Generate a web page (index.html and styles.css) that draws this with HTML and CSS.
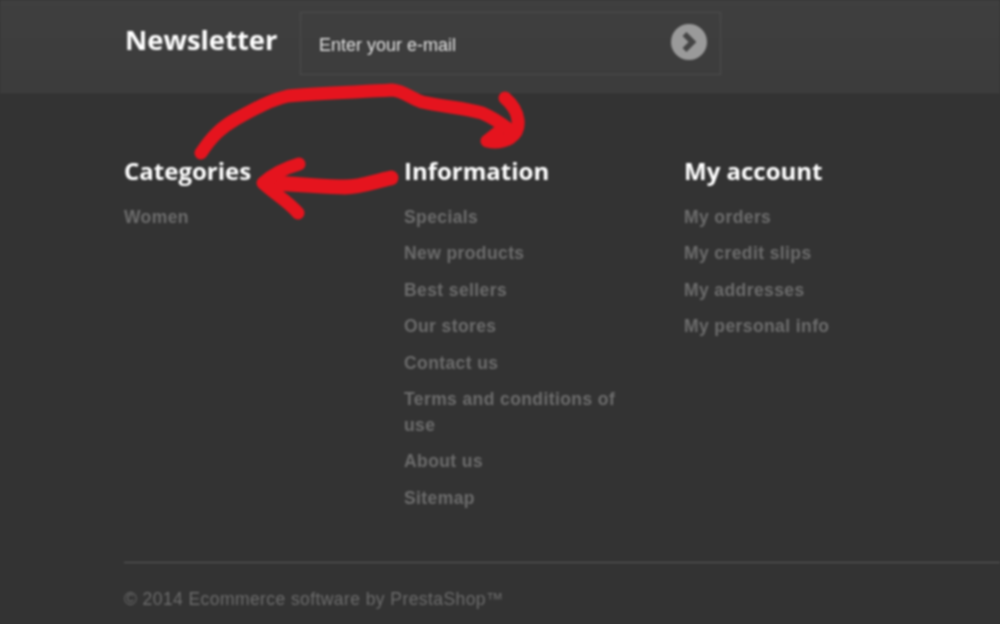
FILE: index.html
```html
<!DOCTYPE html>
<html lang="en">
<head>
<meta charset="utf-8">
<title>Footer</title>
<link rel="stylesheet" href="styles.css">
</head>
<body>
<div class="page">
  <section class="news">
    <h2 class="news-title">Newsletter</h2>
    <div class="news-field">
      <span class="news-placeholder">Enter your e-mail</span>
      <span class="news-btn">
        <svg viewBox="0 0 36 36" width="36" height="36" aria-hidden="true">
          <circle cx="18" cy="18" r="18" fill="#9a9a9a"/>
          <path d="M13.5 10 L21.5 18 L13.5 26" fill="none" stroke="#444444" stroke-width="5.5"/>
        </svg>
      </span>
    </div>
  </section>
  <section class="cols">
    <div class="col">
      <h3 class="col-title">Categories</h3>
      <ul class="links">
        <li>Women</li>
      </ul>
    </div>
    <div class="col">
      <h3 class="col-title">Information</h3>
      <ul class="links">
        <li>Specials</li>
        <li>New products</li>
        <li>Best sellers</li>
        <li>Our stores</li>
        <li>Contact us</li>
        <li>Terms and conditions of use</li>
        <li>About us</li>
        <li>Sitemap</li>
      </ul>
    </div>
    <div class="col">
      <h3 class="col-title">My account</h3>
      <ul class="links">
        <li>My orders</li>
        <li>My credit slips</li>
        <li>My addresses</li>
        <li>My personal info</li>
      </ul>
    </div>
  </section>
  <footer class="legal">© 2014 Ecommerce software by PrestaShop™</footer>
  <svg class="scribble" viewBox="0 0 1000 624" width="1000" height="624" aria-hidden="true">
    <path d="M201 153 C212 136 222 127 236 119 C254 109 270 100 288 96 C320 93 360 92 392 90 C404 91 410 98 422 102 C445 107 465 108 482 113 C494 118 502 124 511 131"/>
    <path d="M505 98 C512 104 517 112 518 120 C519 128 516 134 510 138 C503 142 495 143 487 141 L497 133"/>
    <path class="thick" d="M391 178 C375 181 362 187 345 187 C325 187 300 184 265 183"/>
    <path d="M299 164 C285 168 272 175 263 183 C272 192 288 201 298 213"/>
  </svg>
</div>
</body>
</html>
```
FILE: styles.css
```css
* { box-sizing: border-box; }
html, body { margin: 0; padding: 0; }
body {
  width: 1000px;
  height: 624px;
  overflow: hidden;
  background: #333333;
}
.page {
  position: relative;
  width: 1000px;
  height: 624px;
  overflow: hidden;
  background: #333333;
  filter: blur(0.8px);
}
.news {
  height: 93px;
  padding: 12px 0 0 125px;
  display: flex;
  align-items: flex-start;
  gap: 22px;
  background: linear-gradient(#3f3f3f, #3c3c3c);
  border-bottom: 1px solid #404040;
}
.news-title {
  margin: 0;
  width: 153px;
  font: 700 27.4px/55px "Open Sans", sans-serif;
  color: #ffffff;
  white-space: nowrap;
}
.news-field {
  width: 421px;
  height: 63px;
  padding: 2px 13px 0 18px;
  display: flex;
  align-items: center;
  justify-content: space-between;
  border: 1px solid #4c4c4c;
}
.news-placeholder {
  font: 400 18px/1 "Liberation Sans", Arial, sans-serif;
  color: #e0e0e0;
}
.news-btn { display: flex; margin-top: -6px; }
.cols {
  display: grid;
  grid-template-columns: 280px 280px 280px;
  padding: 57px 0 0 124px;
  height: 469px;
}
.col { width: 232px; }
.col-title {
  margin: 0 0 12px;
  font: 700 24px/42px "Open Sans", sans-serif;
  color: #ffffff;
  white-space: nowrap;
}
.links {
  margin: 0;
  padding: 0;
  list-style: none;
  display: flex;
  flex-direction: column;
  gap: 10.4px;
}
.links li {
  font: 700 17.5px/26px "Liberation Sans", Arial, sans-serif;
  letter-spacing: 0.4px;
  color: #6c6c6c;
}
.legal {
  margin-left: 124px;
  border-top: 1px solid #5a5a5a;
  padding-top: 24px;
  font: 400 17.5px/24px "Liberation Sans", Arial, sans-serif;
  letter-spacing: 0.42px;
  color: #6c6c6c;
}
.scribble {
  position: absolute;
  left: 0;
  top: 0;
  pointer-events: none;
}
.scribble path {
  fill: none;
  stroke: #e5141e;
  stroke-width: 13;
  stroke-linecap: round;
  stroke-linejoin: round;
}
.scribble .thick { stroke-width: 15; }
```
